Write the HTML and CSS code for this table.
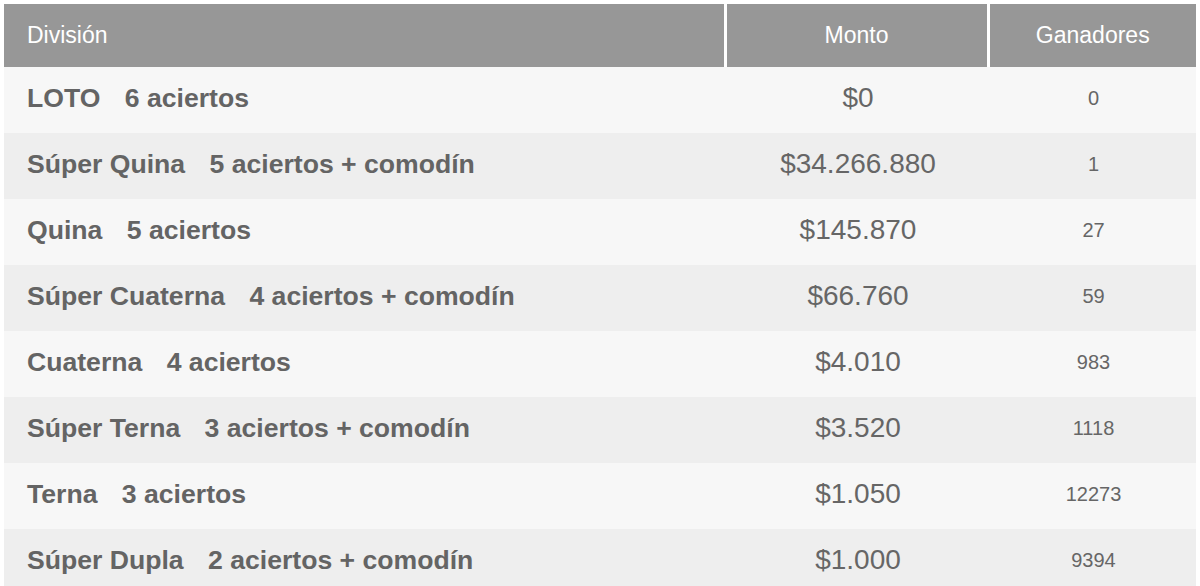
FILE: index.html
```html
<!DOCTYPE html>
<html lang="es">
<head>
<meta charset="utf-8">
<title>Resultados</title>
<link rel="stylesheet" href="styles.css">
</head>
<body>
<table class="prizes">
  <colgroup>
    <col class="c-div">
    <col class="c-amt">
    <col class="c-win">
  </colgroup>
  <thead>
    <tr>
      <th class="h-div">División</th>
      <th class="h-amt">Monto</th>
      <th class="h-win">Ganadores</th>
    </tr>
  </thead>
  <tbody>
    <tr><td class="div"><b>LOTO</b> <span class="hits">6 aciertos</span></td><td class="amt">$0</td><td class="win">0</td></tr>
    <tr><td class="div"><b>Súper Quina</b> <span class="hits">5 aciertos + comodín</span></td><td class="amt">$34.266.880</td><td class="win">1</td></tr>
    <tr><td class="div"><b>Quina</b> <span class="hits">5 aciertos</span></td><td class="amt">$145.870</td><td class="win">27</td></tr>
    <tr><td class="div"><b>Súper Cuaterna</b> <span class="hits">4 aciertos + comodín</span></td><td class="amt">$66.760</td><td class="win">59</td></tr>
    <tr><td class="div"><b>Cuaterna</b> <span class="hits">4 aciertos</span></td><td class="amt">$4.010</td><td class="win">983</td></tr>
    <tr><td class="div"><b>Súper Terna</b> <span class="hits">3 aciertos + comodín</span></td><td class="amt">$3.520</td><td class="win">1118</td></tr>
    <tr><td class="div"><b>Terna</b> <span class="hits">3 aciertos</span></td><td class="amt">$1.050</td><td class="win">12273</td></tr>
    <tr><td class="div"><b>Súper Dupla</b> <span class="hits">2 aciertos + comodín</span></td><td class="amt">$1.000</td><td class="win">9394</td></tr>
  </tbody>
</table>
</body>
</html>
```
FILE: styles.css
```css
html, body {
  margin: 0;
  padding: 0;
  background: #ffffff;
}
body {
  padding: 4px 4px 0 4px;
  font-family: "Liberation Sans", Arial, sans-serif;
  color: #666666;
}
.prizes {
  width: 1192px;
  border-collapse: collapse;
  table-layout: fixed;
}
.c-div { width: 721px; }
.c-amt { width: 263px; }
.c-win { width: 208px; }

.prizes th {
  background: #979797;
  color: #ffffff;
  font-weight: normal;
  font-size: 23px;
  height: 63px;
  padding: 0;
  vertical-align: middle;
}
.h-div {
  text-align: left;
  padding-left: 23px !important;
}
.h-amt, .h-win {
  text-align: center;
  border-left: 3px solid #ffffff;
}

.prizes td {
  height: 66px;
  padding: 0 0 4px 0;
  box-sizing: border-box;
  vertical-align: middle;
}
.prizes tbody tr:nth-child(odd) td { background: #f7f7f7; }
.prizes tbody tr:nth-child(even) td { background: #eeeeee; }

.div {
  padding-left: 23px !important;
  font-size: 26.6px;
  font-weight: bold;
  color: #646464;
}
.div b { font-weight: bold; }
.hits { margin-left: 17px; }

.amt {
  text-align: center;
  font-size: 28px;
  color: #666666;
  padding-left: 3px !important;
}
.win {
  text-align: center;
  font-size: 20px;
  color: #666666;
  padding-left: 3px !important;
}
```
